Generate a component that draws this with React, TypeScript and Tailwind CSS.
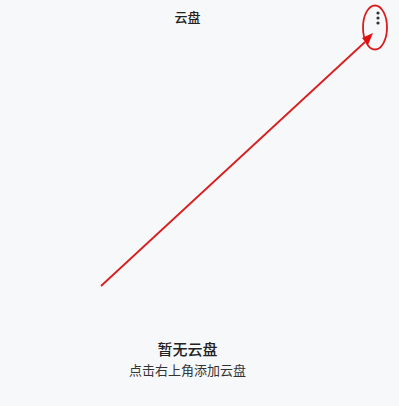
import React from "react";

function App() {
  return (
    <div
      className="relative flex h-[406px] w-[399px] flex-col bg-[#f7f8fa] text-[#222]"
      style={{ fontFamily: '"Noto Sans CJK SC", "Noto Sans", sans-serif' }}
    >
      <div className="relative flex h-[34px] items-center justify-center pr-[24px]">
        <span className="text-[13px] font-medium">云盘</span>
        <button className="absolute right-[14px] top-[9px] flex h-[18px] w-[14px] items-center justify-center">
          <svg width="4" height="14" viewBox="0 0 4 14">
            <circle cx="2" cy="2" r="1.6" fill="#333" />
            <circle cx="2" cy="7" r="1.6" fill="#333" />
            <circle cx="2" cy="12" r="1.6" fill="#333" />
          </svg>
        </button>
      </div>
      <div className="flex flex-1 flex-col items-center justify-end pb-[27px] pr-[24px]">
        <p className="text-[15px] font-medium leading-[20px] text-[#222]">暂无云盘</p>
        <p className="mt-[2px] text-[13px] leading-[18px] text-[#333]">点击右上角添加云盘</p>
      </div>
      <svg
        className="pointer-events-none absolute left-0 top-0"
        width="399"
        height="406"
        viewBox="0 0 399 406"
      >
        <ellipse cx="375" cy="27.5" rx="12" ry="22" fill="none" stroke="#d81e1e" strokeWidth="1.8" />
        <line x1="101" y1="286" x2="365" y2="42" stroke="#d81e1e" strokeWidth="1.8" />
        <polygon points="373,33 362,38 368,45" fill="#e01010" />
      </svg>
    </div>
  );
}

export default App;
